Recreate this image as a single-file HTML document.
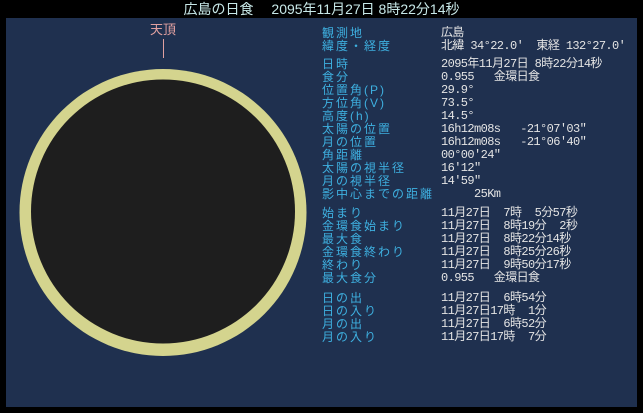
<!DOCTYPE html>
<html><head><meta charset="utf-8"><style>
body{margin:0;width:643px;height:413px;background:#000;position:relative;overflow:hidden;font-family:"Liberation Sans","Noto Sans CJK JP",sans-serif}
#p{position:absolute;left:6px;top:18px;width:631px;height:389px;background:#1f304f}
.t{position:absolute;white-space:pre;font-size:12px;line-height:13px}
.l{color:#3eb0e0;letter-spacing:2px}
.v{color:#e4e4e4;font-family:"Liberation Mono","Noto Sans CJK JP",monospace;font-size:12px;letter-spacing:-0.6px}
</style></head><body>
<div class="t" style="left:0;width:643px;top:1px;text-align:center;color:#c8e8e8;font-size:14px;line-height:16px">広島の日食　 2095年11月27日 8時22分14秒</div>
<div id="p"></div>
<svg style="position:absolute;left:0;top:0" width="643" height="413">
<circle cx="163" cy="212.5" r="143.5" fill="#d4d48e"/>
<circle cx="163" cy="211.5" r="132" fill="#1e1e1e"/>
<line x1="163.5" y1="39" x2="163.5" y2="58" stroke="#e0a0a0" stroke-width="1"/>
</svg>
<div class="t" style="left:150px;top:23px;color:#e0a0a0;font-size:13px;letter-spacing:0">天頂</div>
<div class="t l" style="left:322px;top:27px">観測地
緯度・経度</div>
<div class="t v" style="left:441px;top:27px">広島
北緯 34°22.0'  東経 132°27.0'</div>
<div class="t l" style="left:322px;top:58px">日時
食分
位置角(P)
方位角(V)
高度(h)
太陽の位置
月の位置
角距離
太陽の視半径
月の視半径
影中心までの距離</div>
<div class="t v" style="left:441px;top:58px">2095年11月27日 8時22分14秒
0.955   金環日食
29.9°
73.5°
14.5°
16h12m08s   -21°07'03"
16h12m08s   -21°06'40"
00°00'24"
16'12"
14'59"
     25Km</div>
<div class="t l" style="left:322px;top:207px">始まり
金環食始まり
最大食
金環食終わり
終わり
最大食分</div>
<div class="t v" style="left:441px;top:207px">11月27日  7時  5分57秒
11月27日  8時19分  2秒
11月27日  8時22分14秒
11月27日  8時25分26秒
11月27日  9時50分17秒
0.955   金環日食</div>
<div class="t l" style="left:322px;top:292px">日の出
日の入り
月の出
月の入り</div>
<div class="t v" style="left:441px;top:292px">11月27日  6時54分
11月27日17時  1分
11月27日  6時52分
11月27日17時  7分</div>
</body></html>
